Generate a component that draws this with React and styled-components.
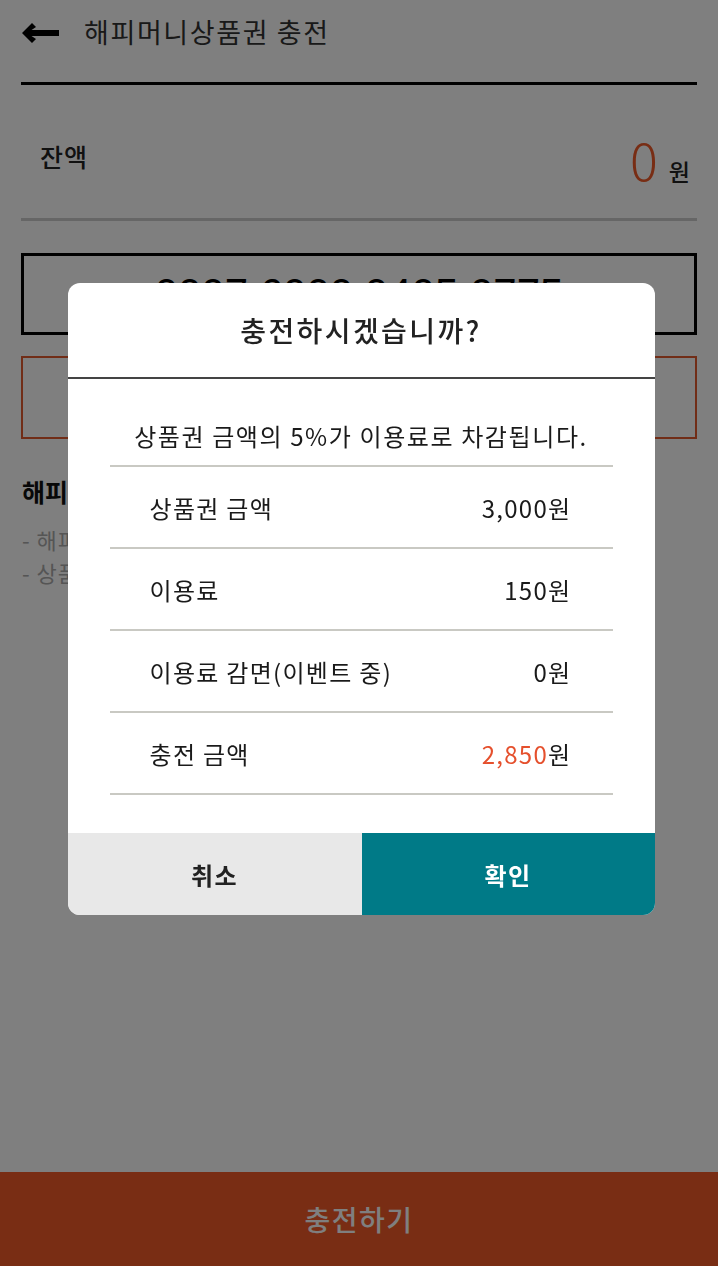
import React from "react";
import styled, { createGlobalStyle } from "styled-components";

const GlobalStyle = createGlobalStyle`
  * { box-sizing: border-box; }
  body {
    margin: 0;
    background: #fff;
    font-family: "Noto Sans CJK KR", "Noto Sans", sans-serif;
    color: #222;
  }
`;

const rows = [
  { label: "상품권 금액", value: "3,000" },
  { label: "이용료", value: "150" },
  { label: "이용료 감면(이벤트 중)", value: "0" },
  { label: "충전 금액", value: "2,850", accent: true },
];

const App = () => {
  return (
    <>
      <GlobalStyle />
      <Page>
        <Content>
          <Header>
            <BackIcon viewBox="0 0 37 22">
              <path d="M0 11 L10 1 L14 5 L9.5 8 H37 V14 H9.5 L14 17 L10 21 Z" fill="#000" />
            </BackIcon>
            <HeaderTitle>해피머니상품권 충전</HeaderTitle>
          </Header>
          <BalanceRow>
            <BalanceLabel>잔액</BalanceLabel>
            <BalanceValue>
              <Amount>0</Amount>
              <Unit>원</Unit>
            </BalanceValue>
          </BalanceRow>
          <CodeBox>0007 6000 0405 0775</CodeBox>
          <PinBox />
          <NoticeTitle>해피머니상품권 충전 안내</NoticeTitle>
          <NoticeList>
            <li>- 해피머니상품권은 충전 후 취소가 불가합니다.</li>
            <li>- 상품권 금액의 5%가 이용료로 차감됩니다.</li>
          </NoticeList>
        </Content>
        <ChargeBar>충전하기</ChargeBar>
      </Page>

      <Overlay>
        <Modal>
          <ModalTitle>충전하시겠습니까?</ModalTitle>
          <ModalBody>
            <Description>상품권 금액의 5%가 이용료로 차감됩니다.</Description>
            <Table>
              {rows.map((row) => (
                <Row key={row.label}>
                  <span>{row.label}</span>
                  <span>
                    <Value $accent={row.accent}>{row.value}</Value>원
                  </span>
                </Row>
              ))}
            </Table>
          </ModalBody>
          <Buttons>
            <ModalButton>취소</ModalButton>
            <ModalButton $primary>확인</ModalButton>
          </Buttons>
        </Modal>
      </Overlay>
    </>
  );
};

const Page = styled.div`
  min-height: 100vh;
  display: flex;
  flex-direction: column;
`;

const Content = styled.div`
  flex: 1;
  padding: 0 21px;
`;

const Header = styled.div`
  height: 85px;
  display: flex;
  align-items: flex-start;
  padding-top: 12px;
  gap: 25px;
  border-bottom: 3px solid #000;
`;

const BackIcon = styled.svg`
  width: 37px;
  height: 22px;
  margin-top: 10px;
  margin-left: 1px;
  flex-shrink: 0;
`;

const HeaderTitle = styled.h1`
  margin: 0;
  font-size: 27px;
  font-weight: 400;
  letter-spacing: 1.6px;
  color: #333;
  line-height: 40px;
`;

const BalanceRow = styled.div`
  height: 136px;
  display: flex;
  justify-content: space-between;
  align-items: center;
  padding: 14px 7px 0 19px;
  border-bottom: 3px solid #ccc;
`;

const BalanceLabel = styled.span`
  font-size: 25px;
  font-weight: 500;
  letter-spacing: 1px;
  color: #222;
  margin-top: -5px;
`;

const BalanceValue = styled.span`
  display: flex;
  align-items: baseline;
  gap: 11px;
`;

const Amount = styled.span`
  font-size: 52px;
  font-weight: 300;
  color: #f05a28;
`;

const Unit = styled.span`
  font-size: 23px;
  font-weight: 500;
  color: #222;
`;

const CodeBox = styled.div`
  margin-top: 32px;
  height: 82px;
  border: 3px solid #000;
  display: flex;
  justify-content: center;
  align-items: center;
  font-family: "Liberation Sans", Arial, sans-serif;
  font-size: 42px;
  color: #000;
`;

const PinBox = styled.div`
  margin-top: 21px;
  height: 83px;
  border: 2px solid #e35b2e;
`;

const NoticeTitle = styled.h2`
  margin: 34px 0 0 1px;
  font-size: 25px;
  font-weight: 700;
  color: #111;
`;

const NoticeList = styled.ul`
  list-style: none;
  margin: 14px 0 0 1px;
  padding: 0;
  font-size: 22px;
  letter-spacing: 1px;
  color: #aaa;
  line-height: 33px;
`;

const ChargeBar = styled.div`
  height: 94px;
  background: #f35a28;
  color: #fff;
  font-size: 28px;
  font-weight: 500;
  letter-spacing: 1.5px;
  display: flex;
  justify-content: center;
  align-items: center;
`;

const Overlay = styled.div`
  position: fixed;
  inset: 0;
  background: rgba(0, 0, 0, 0.5);
  display: flex;
  justify-content: center;
  align-items: flex-start;
  padding: 283px 0 0 4px;
`;

const Modal = styled.div`
  width: 587px;
  background: #fff;
  border-radius: 12px;
  overflow: hidden;
  display: flex;
  flex-direction: column;
`;

const ModalTitle = styled.div`
  height: 96px;
  display: flex;
  justify-content: center;
  align-items: center;
  font-size: 28px;
  font-weight: 500;
  letter-spacing: 2.4px;
  color: #222;
  border-bottom: 2px solid #444;
`;

const ModalBody = styled.div`
  padding: 0 42px 38px;
`;

const Description = styled.div`
  height: 88px;
  display: flex;
  justify-content: center;
  align-items: flex-end;
  padding-bottom: 12px;
  font-size: 24px;
  letter-spacing: 1.6px;
  color: #1a1a1a;
  border-bottom: 2px solid #c9c9c3;
`;

const Table = styled.div`
  display: flex;
  flex-direction: column;
`;

const Row = styled.div`
  height: 82px;
  display: flex;
  justify-content: space-between;
  align-items: center;
  padding: 0 41px 0 40px;
  font-size: 24px;
  letter-spacing: 1.3px;
  color: #1a1a1a;
  border-bottom: 2px solid #c9c9c3;
`;

const Value = styled.span`
  color: ${(props) => (props.$accent ? "#e5502d" : "inherit")};
`;

const Buttons = styled.div`
  display: flex;
  height: 82px;
`;

const ModalButton = styled.button`
  flex: ${(props) => (props.$primary ? "293px" : "294px")};
  border: none;
  margin: 0;
  font-family: inherit;
  font-size: 24px;
  font-weight: 700;
  letter-spacing: 1.5px;
  background: ${(props) => (props.$primary ? "#007a87" : "#e8e8e8")};
  color: ${(props) => (props.$primary ? "#fff" : "#222")};
`;

export default App;
